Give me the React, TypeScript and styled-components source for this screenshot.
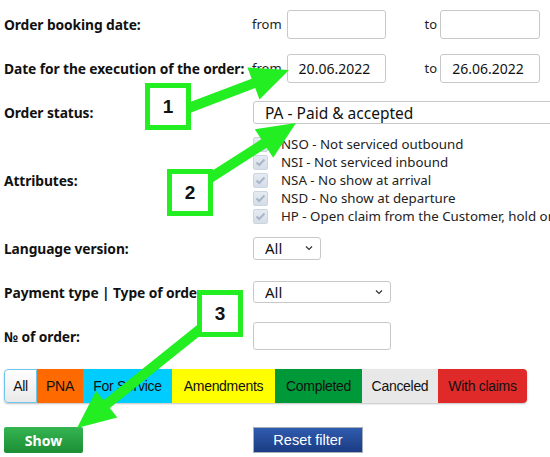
import React from 'react'
import styled, { createGlobalStyle } from 'styled-components'

const GlobalStyle = createGlobalStyle`
  html, body {
    margin: 0;
    padding: 0;
    background: #fff;
    overflow: hidden;
  }
  body {
    font-family: 'Noto Sans', 'DejaVu Sans', sans-serif;
    color: #111;
  }
`

const GREEN = '#22ee22'

const Page = styled.div`
  position: relative;
  width: 550px;
  height: 457px;
  padding: 2px 0 0 4px;
  box-sizing: border-box;
  overflow: hidden;
`

const Row = styled.div<{ h?: number }>`
  display: grid;
  grid-template-columns: 248px 1fr;
  align-items: center;
  min-height: ${({ h }) => h || 44}px;
`

const Label = styled.div`
  font-family: 'Noto Sans', sans-serif;
  font-weight: 700;
  font-size: 13.8px;
  letter-spacing: -0.1px;
  white-space: nowrap;
  color: #111;
`

const Field = styled.div`
  display: flex;
  align-items: center;
  white-space: nowrap;
  color: #222;
`

const Word = styled.span<{ gap?: number }>`
  margin-right: ${({ gap }) => gap ?? 5}px;
  font-family: 'Noto Sans', sans-serif;
  font-size: 13px;
`

const TextInput = styled.input<{ w?: number; h?: number }>`
  box-sizing: border-box;
  width: ${({ w }) => w || 99}px;
  height: ${({ h }) => h || 29}px;
  border: 1px solid #c8c8c8;
  border-radius: 3px;
  padding: 0 11px;
  font-family: 'Noto Sans', sans-serif;
  font-size: 14px;
  color: #111;
  background: #fff;
  outline: none;
`

const DateGroup = styled.div`
  display: flex;
  align-items: center;
  margin-right: 39px;
`

const SelectWrap = styled.div<{ w: number; h?: number }>`
  position: relative;
  width: ${({ w }) => w}px;
  height: ${({ h }) => h || 23}px;
  margin-left: 1px;
`

const Select = styled.select<{ big?: boolean }>`
  appearance: none;
  box-sizing: border-box;
  width: 100%;
  height: 100%;
  border: 1px solid #c8c8c8;
  border-radius: 3px;
  padding: 0 0 0 11px;
  font-family: 'Noto Sans', sans-serif;
  font-size: ${({ big }) => (big ? 15.5 : 15)}px;
  color: #111;
  background: #fff;
  outline: none;
`

const Chevron = styled.svg`
  position: absolute;
  right: 8px;
  top: 50%;
  margin-top: -3px;
  width: 8px;
  height: 6px;
  pointer-events: none;
`

const CheckList = styled.div`
  display: flex;
  flex-direction: column;
  margin-left: 1px;
`

const CheckRow = styled.label`
  display: flex;
  align-items: center;
  height: 18px;
  line-height: 18px;
  font-family: 'Noto Sans', sans-serif;
  font-size: 13.3px;
  color: #222;
  white-space: nowrap;
`

const Tick = styled.span`
  display: inline-flex;
  align-items: center;
  justify-content: center;
  flex-shrink: 0;
  box-sizing: border-box;
  width: 15px;
  height: 15px;
  margin-right: 13px;
  border: 1px solid #cdd5e0;
  border-radius: 2px;
  background: linear-gradient(#e6ebf2, #d5dde8);
`

const Tabs = styled.div`
  display: flex;
  margin-top: 11px;
  height: 34px;
  width: max-content;
  border-radius: 4px;
  box-shadow: 0 1px 2px rgba(0, 0, 0, 0.25);
`

const Tab = styled.div<{ bg: string; w: number; active?: boolean }>`
  display: flex;
  align-items: center;
  justify-content: center;
  box-sizing: border-box;
  width: ${({ w }) => w}px;
  background: ${({ bg }) => bg};
  font-family: 'Liberation Sans', Arial, sans-serif;
  font-size: 14px;
  letter-spacing: -0.3px;
  color: #111;
  border: ${({ active }) => (active ? '1px solid #6cc6ea' : 'none')};
  &:first-child {
    border-radius: 4px 0 0 4px;
  }
  &:last-child {
    border-radius: 0 4px 4px 0;
  }
`

const Buttons = styled.div`
  display: grid;
  grid-template-columns: 249px 1fr;
  margin-top: 24px;
`

const ShowButton = styled.button`
  width: 79px;
  height: 26px;
  border: none;
  border-radius: 2px;
  background: linear-gradient(#35b552, #1c8e34);
  color: #fff;
  font-family: 'Noto Sans', sans-serif;
  font-weight: 700;
  font-size: 14px;
  padding: 0;
`

const ResetButton = styled.button`
  width: 110px;
  height: 26px;
  border: 1px solid #a9adb5;
  background: linear-gradient(#2f5cae, #1b3b83);
  color: #fff;
  font-family: 'Liberation Sans', Arial, sans-serif;
  font-size: 14.5px;
  padding: 0;
`

const Overlay = styled.svg`
  position: absolute;
  left: 0;
  top: 0;
  pointer-events: none;
`

const Badge = styled.div<{ x: number; y: number }>`
  position: absolute;
  left: ${({ x }) => x}px;
  top: ${({ y }) => y}px;
  width: 46px;
  height: 47px;
  box-sizing: border-box;
  border: 5px solid ${GREEN};
  background: #fff;
  display: flex;
  align-items: center;
  justify-content: center;
  font-family: 'Liberation Sans', Arial, sans-serif;
  font-weight: 700;
  font-size: 19px;
  color: #111;
`

const arrow = (x1: number, y1: number, x2: number, y2: number, w = 10, hl = 38, hw = 34) => {
  const len = Math.hypot(x2 - x1, y2 - y1)
  const ux = (x2 - x1) / len
  const uy = (y2 - y1) / len
  const px = -uy
  const py = ux
  const bx = x2 - ux * hl
  const by = y2 - uy * hl
  const pts = [
    [x1 + (px * w) / 2, y1 + (py * w) / 2],
    [bx + (px * w) / 2, by + (py * w) / 2],
    [bx + (px * hw) / 2, by + (py * hw) / 2],
    [x2, y2],
    [bx - (px * hw) / 2, by - (py * hw) / 2],
    [bx - (px * w) / 2, by - (py * w) / 2],
    [x1 - (px * w) / 2, y1 - (py * w) / 2],
  ]
  return pts.map((p) => p.map((v) => v.toFixed(1)).join(',')).join(' ')
}

const Caret = () => (
  <Chevron viewBox='0 0 8 6'>
    <path d='M1 1.5 L4 4.5 L7 1.5' fill='none' stroke='#333' strokeWidth='1.2' />
  </Chevron>
)

const CheckMark = () => (
  <svg width='11' height='9' viewBox='0 0 11 9'>
    <path d='M1.5 4.5 L4.2 7 L9.5 1.5' fill='none' stroke='#a8b6c9' strokeWidth='2' />
  </svg>
)

const attributes = [
  'NSO - Not serviced outbound',
  'NSI - Not serviced inbound',
  'NSA - No show at arrival',
  'NSD - No show at departure',
  'HP - Open claim from the Customer, hold on',
]

const tabs = [
  { name: 'All', w: 33, bg: 'linear-gradient(#ffffff, #e9e9e9)', active: true },
  { name: 'PNA', w: 46, bg: '#ff6a00' },
  { name: 'For Service', w: 89, bg: '#00ccff' },
  { name: 'Amendments', w: 103, bg: '#ffff00' },
  { name: 'Completed', w: 87, bg: '#00993a' },
  { name: 'Canceled', w: 76, bg: '#e8e8e8' },
  { name: 'With claims', w: 89, bg: '#e02a2a' },
]

export default function App() {
  return (
    <Page>
      <GlobalStyle />
      <Row>
        <Label>Order booking date:</Label>
        <Field>
          <DateGroup>
            <Word>from</Word>
            <TextInput />
          </DateGroup>
          <Word gap={3}>to</Word>
          <TextInput w={100} />
        </Field>
      </Row>
      <Row>
        <Label>Date for the execution of the order:</Label>
        <Field>
          <DateGroup>
            <Word>from</Word>
            <TextInput defaultValue='20.06.2022' />
          </DateGroup>
          <Word gap={3}>to</Word>
          <TextInput w={100} defaultValue='26.06.2022' />
        </Field>
      </Row>
      <Row>
        <Label>Order status:</Label>
        <SelectWrap w={320} h={23}>
          <Select big>
            <option>PA - Paid &amp; accepted</option>
          </Select>
        </SelectWrap>
      </Row>
      <Row h={92}>
        <Label>Attributes:</Label>
        <CheckList>
          {attributes.map((a) => (
            <CheckRow key={a}>
              <Tick>
                <CheckMark />
              </Tick>
              {a}
            </CheckRow>
          ))}
        </CheckList>
      </Row>
      <Row>
        <Label>Language version:</Label>
        <SelectWrap w={68}>
          <Select>
            <option>All</option>
          </Select>
          <Caret />
        </SelectWrap>
      </Row>
      <Row>
        <Label>Payment type | Type of order:</Label>
        <SelectWrap w={138} h={22}>
          <Select>
            <option>All</option>
          </Select>
          <Caret />
        </SelectWrap>
      </Row>
      <Row>
        <Label>№ of order:</Label>
        <Field>
          <TextInput w={138} h={28} style={{ marginLeft: 1 }} />
        </Field>
      </Row>
      <Tabs>
        {tabs.map((t) => (
          <Tab key={t.name} bg={t.bg} w={t.w} active={t.active}>
            {t.name}
          </Tab>
        ))}
      </Tabs>
      <Buttons>
        <div>
          <ShowButton>Show</ShowButton>
        </div>
        <div>
          <ResetButton>Reset filter</ResetButton>
        </div>
      </Buttons>

      <Overlay width='550' height='457'>
        <polygon points={arrow(186, 109, 289, 70)} fill={GREEN} />
        <polygon points={arrow(207, 180, 296, 123)} fill={GREEN} />
        <polygon points={arrow(204, 326, 77, 428)} fill={GREEN} />
      </Overlay>
      <Badge x={145} y={83}>1</Badge>
      <Badge x={167} y={169}>2</Badge>
      <Badge x={197} y={290}>3</Badge>
    </Page>
  )
}
